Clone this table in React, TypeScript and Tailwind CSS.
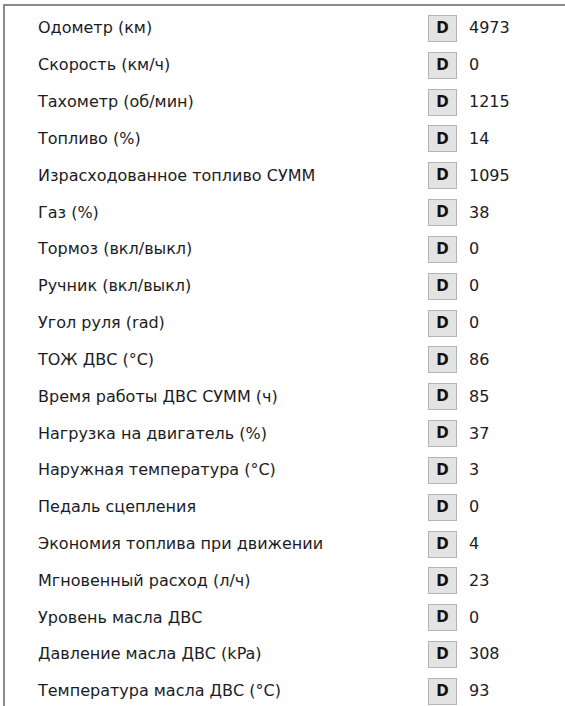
const rows: [string, string][] = [
  ["Одометр (км)", "4973"],
  ["Скорость (км/ч)", "0"],
  ["Тахометр (об/мин)", "1215"],
  ["Топливо (%)", "14"],
  ["Израсходованное топливо СУММ", "1095"],
  ["Газ (%)", "38"],
  ["Тормоз (вкл/выкл)", "0"],
  ["Ручник (вкл/выкл)", "0"],
  ["Угол руля (rad)", "0"],
  ["ТОЖ ДВС (°C)", "86"],
  ["Время работы ДВС СУММ (ч)", "85"],
  ["Нагрузка на двигатель (%)", "37"],
  ["Наружная температура (°C)", "3"],
  ["Педаль сцепления", "0"],
  ["Экономия топлива при движении", "4"],
  ["Мгновенный расход (л/ч)", "23"],
  ["Уровень масла ДВС", "0"],
  ["Давление масла ДВС (kPa)", "308"],
  ["Температура масла ДВС (°C)", "93"],
];

export default function App() {
  return (
    <div className="w-[565px] h-[706px] bg-white overflow-hidden pt-[4px] pl-[3px]">
      <div
        className="border-t-2 border-l-2 border-[#8a8a8a] h-full pt-[4px]"
        style={{ fontFamily: '"DejaVu Sans", Verdana, sans-serif' }}
      >
        {rows.map(([label, value]) => (
          <div key={label} className="flex items-center h-[36.83px]">
            <div className="w-[423px] pl-[33px] text-[16px] text-[#1c1c24] whitespace-nowrap">{label}</div>
            <div className="w-[29px] h-[27px] bg-[#e3e3e3] border border-[#b4b4b4] flex items-center justify-center text-[15px] font-bold text-[#111]">
              D
            </div>
            <div className="pl-[12px] text-[16px] text-[#1c1c24]">{value}</div>
          </div>
        ))}
      </div>
    </div>
  );
}
